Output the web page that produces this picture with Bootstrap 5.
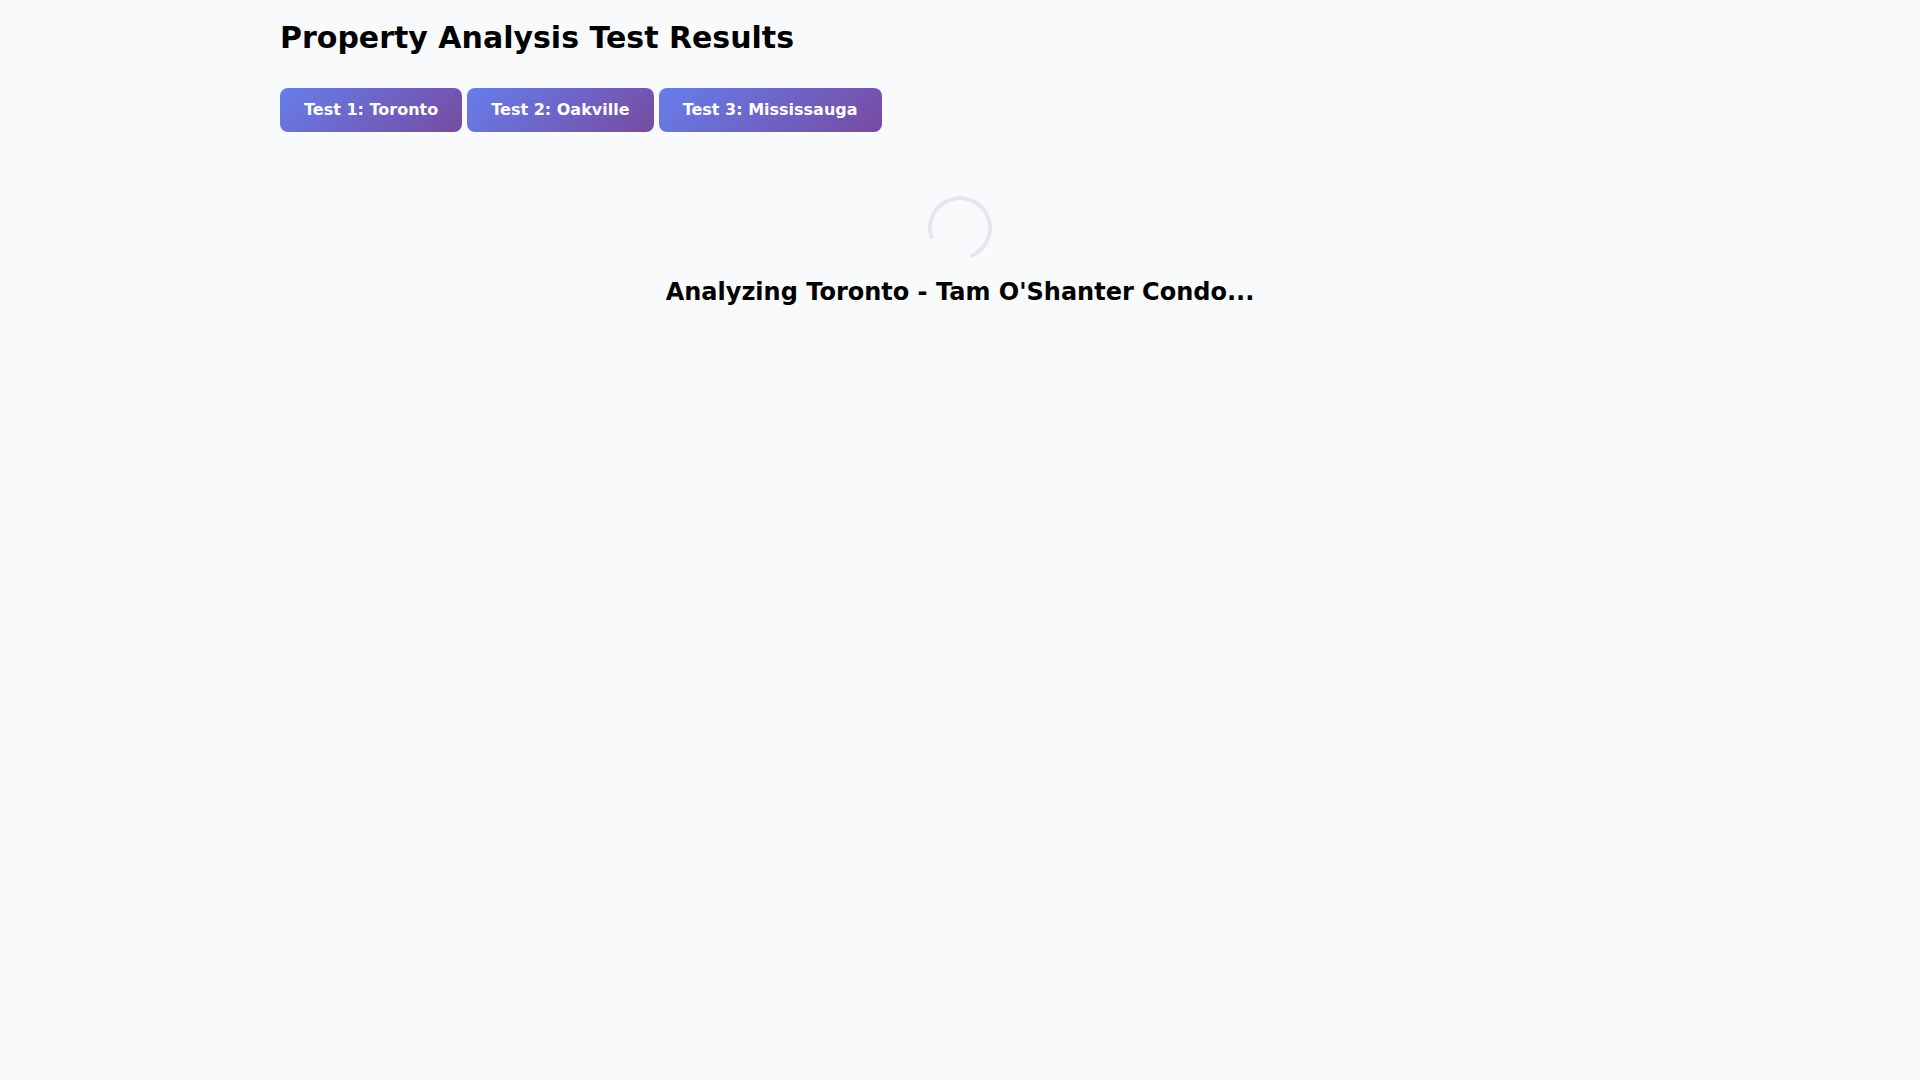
<!DOCTYPE html>
<html lang="en">
<head>
<meta charset="utf-8">
<meta name="viewport" content="width=device-width, initial-scale=1">
<title>Property Analysis Test Results</title>
<link href="https://cdn.jsdelivr.net/npm/bootstrap@5.3.0/dist/css/bootstrap.min.css" rel="stylesheet">
<style>
body { background: #f9fafb; color: #000; font-family: "DejaVu Sans", sans-serif; }
.results-page { max-width: 1400px; padding: 20px; }
.results-title { font-size: 30px; font-weight: 700; line-height: 36px; margin-bottom: 32px; }
.btn-test { --bs-btn-color: #fff; --bs-btn-hover-color: #fff; --bs-btn-active-color: #fff; background: linear-gradient(135deg, #667eea 0%, #764ba2 100%); border: 0; border-radius: 8px; padding: 12px 24px; font-size: 16px; font-weight: 600; line-height: 20px; vertical-align: top; }
.analysis-status { padding: 64px 0; }
.status-title { font-size: 24px; font-weight: 700; line-height: 32px; }
.loader { width: 64px; height: 64px; margin-bottom: 16px; }
</style>
</head>
<body>
<main class="container-fluid results-page">
  <h1 class="results-title">Property Analysis Test Results</h1>
  <div>
    <button type="button" class="btn btn-test">Test 1: Toronto</button>
    <button type="button" class="btn btn-test">Test 2: Oakville</button>
    <button type="button" class="btn btn-test">Test 3: Mississauga</button>
  </div>
  <section class="analysis-status d-flex flex-column align-items-center text-center" role="status">
    <svg class="loader" viewBox="0 0 64 64" fill="none" aria-hidden="true"><path d="M4 42.8A30 30 0 1 1 42.8 60" stroke="#e5e7eb" stroke-width="4"/></svg>
    <h2 class="status-title mb-0">Analyzing Toronto - Tam O'Shanter Condo...</h2>
  </section>
</main>
<script src="https://cdn.jsdelivr.net/npm/bootstrap@5.3.0/dist/js/bootstrap.bundle.min.js"></script>
</body>
</html>
